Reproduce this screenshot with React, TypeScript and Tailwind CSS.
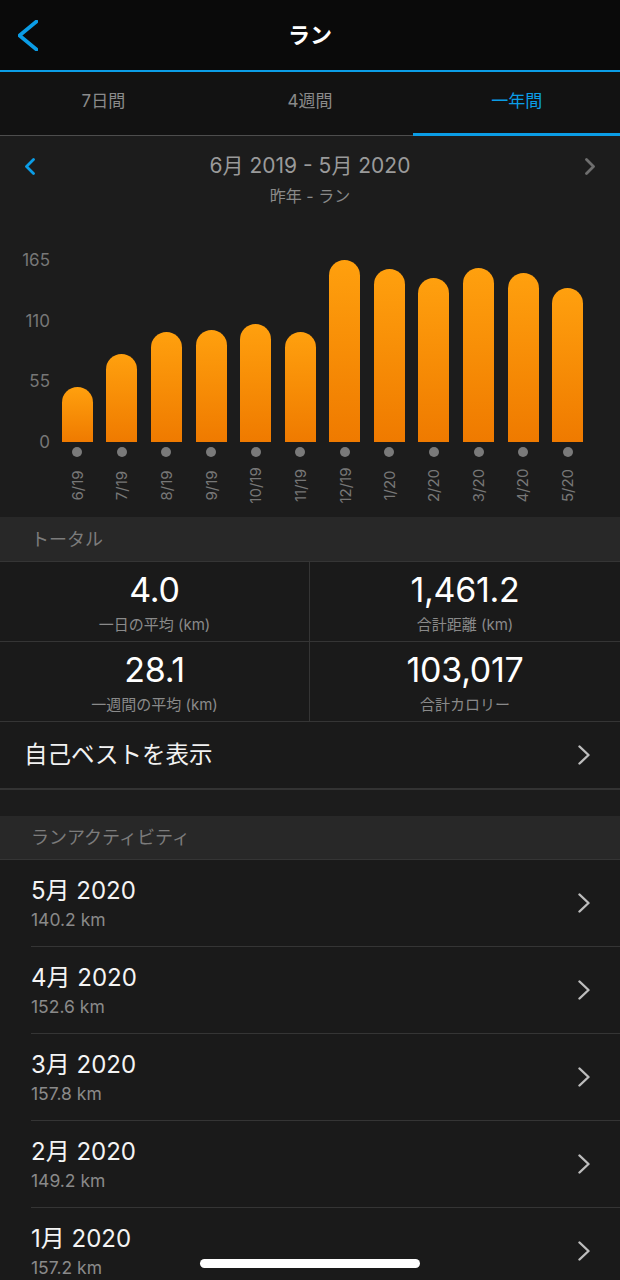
import React from "react";

const FONT = { fontFamily: '"Inter", "Noto Sans CJK JP", sans-serif' };

const bars = [
  { l: "6/19", h: 55 },
  { l: "7/19", h: 88 },
  { l: "8/19", h: 110 },
  { l: "9/19", h: 112 },
  { l: "10/19", h: 118 },
  { l: "11/19", h: 110 },
  { l: "12/19", h: 182 },
  { l: "1/20", h: 173 },
  { l: "2/20", h: 164 },
  { l: "3/20", h: 174 },
  { l: "4/20", h: 169 },
  { l: "5/20", h: 154 },
];

const months = [
  { t: "5月 2020", s: "140.2 km" },
  { t: "4月 2020", s: "152.6 km" },
  { t: "3月 2020", s: "157.8 km" },
  { t: "2月 2020", s: "149.2 km" },
  { t: "1月 2020", s: "157.2 km" },
];

function Chevron({ color = "#bdbdbd", left = false, w = 12, h = 20, sw = 2.4 }: { color?: string; left?: boolean; w?: number; h?: number; sw?: number }) {
  return (
    <svg width={w} height={h} viewBox={`0 0 ${w} ${h}`} fill="none">
      {left ? (
        <polyline points={`${w - 1.5},1.5 1.5,${h / 2} ${w - 1.5},${h - 1.5}`} stroke={color} strokeWidth={sw} strokeLinecap="round" strokeLinejoin="round" />
      ) : (
        <polyline points={`1.5,1.5 ${w - 1.5},${h / 2} 1.5,${h - 1.5}`} stroke={color} strokeWidth={sw} strokeLinecap="round" strokeLinejoin="round" />
      )}
    </svg>
  );
}

export default function App() {
  return (
    <div className="relative w-[620px] h-[1280px] overflow-hidden bg-[#1c1c1c]" style={FONT}>
      {/* Header */}
      <div className="h-[70px] bg-[#0a0a0a] grid grid-cols-[80px_1fr_80px] items-center">
        <div className="pl-[18px] flex items-center">
          <Chevron color="#0b9de6" left w={20} h={31} sw={3.6} />
        </div>
        <div className="text-center text-white text-[22px] font-bold leading-none">ラン</div>
        <div />
      </div>
      <div className="h-[2px] bg-[#0b9de6]" />

      {/* Tabs */}
      <div className="h-[64px] flex bg-[#121212]">
        <div className="flex-1 flex items-center justify-center border-b border-[#4d4d4d] text-[17px] text-[#8a8a8a] pb-[4px]">7日間</div>
        <div className="flex-1 flex items-center justify-center border-b border-[#4d4d4d] text-[17px] text-[#8a8a8a] pb-[4px]">4週間</div>
        <div className="flex-1 flex items-center justify-center border-b-[3px] border-[#0b9de6] text-[17px] text-[#0b9de6] pb-[2px]">一年間</div>
      </div>

      {/* Date nav */}
      <div className="bg-[#1c1c1c]">
        <div className="relative pt-[16px] flex flex-col items-center">
          <div className="text-[21px] leading-[28px] text-[#9a9a9a]">6月 2019 - 5月 2020</div>
          <div className="mt-[5px] text-[16px] leading-[22px] text-[#8a8a8a]">昨年 - ラン</div>
          <div className="absolute left-[25px] top-[22px]">
            <Chevron color="#0b9de6" left w={10} h={17} sw={2.8} />
          </div>
          <div className="absolute right-[25px] top-[22px]">
            <Chevron color="#6e6e6e" w={10} h={17} sw={2.8} />
          </div>
        </div>

        {/* Chart */}
        <div className="mt-[53px] flex">
          <div className="w-[55px] relative h-[182px] text-[17px] leading-[20px] text-[#777777]">
            <span className="absolute right-[5px] top-[-10px]">165</span>
            <span className="absolute right-[5px] top-[51px]">110</span>
            <span className="absolute right-[5px] top-[111px]">55</span>
            <span className="absolute right-[5px] top-[172px]">0</span>
          </div>
          <div className="w-[535px]">
            <div className="h-[182px] grid grid-cols-12 items-end">
              {bars.map((b) => (
                <div key={b.l} className="flex justify-center items-end h-full">
                  <div
                    className="w-[31px] rounded-t-full bg-linear-to-b from-[#ffa00e] to-[#ef7a00]"
                    style={{ height: b.h }}
                  />
                </div>
              ))}
            </div>
            <div className="mt-[5px] grid grid-cols-12">
              {bars.map((b) => (
                <div key={b.l} className="flex justify-center">
                  <div className="w-[10px] h-[10px] rounded-full bg-[#7a7a7a]" />
                </div>
              ))}
            </div>
            <div className="mt-[5px] h-[46px] grid grid-cols-12">
              {bars.map((b) => (
                <div key={b.l} className="flex justify-center items-center">
                  <span className="-rotate-90 whitespace-nowrap text-[15px] leading-none text-[#777777]">{b.l}</span>
                </div>
              ))}
            </div>
          </div>
        </div>
        <div className="h-[9px]" />
      </div>

      {/* Totals */}
      <div className="h-[45px] bg-[#282828] border-b border-[#353535] flex items-center px-[31px] text-[18px] text-[#7c7c7c]">トータル</div>
      <div className="grid grid-cols-2 bg-[#1a1a1a]">
        {[
          { v: "4.0", l: "一日の平均 (km)" },
          { v: "1,461.2", l: "合計距離 (km)" },
          { v: "28.1", l: "一週間の平均 (km)" },
          { v: "103,017", l: "合計カロリー" },
        ].map((c, i) => (
          <div
            key={c.v}
            className={`h-[80px] flex flex-col items-center pt-[8px] border-b border-[#353535] ${i % 2 === 0 ? "border-r" : ""}`}
          >
            <div className="text-[34px] leading-[40px] text-white tracking-[-0.3px]">{c.v}</div>
            <div className="mt-[5px] text-[15px] leading-[20px] text-[#8a8a8a]">{c.l}</div>
          </div>
        ))}
      </div>
      <div className="h-[68px] bg-[#1a1a1a] border-b-2 border-[#333333] flex items-center justify-between pl-[24px] pr-[30px]">
        <span className="text-[23.5px] text-[#f2f2f2]">自己ベストを表示</span>
        <Chevron />
      </div>
      <div className="h-[26px] bg-[#1c1c1c]" />

      {/* Activities */}
      <div className="h-[44px] bg-[#282828] border-b border-[#353535] flex items-center px-[31px] text-[18px] text-[#7c7c7c]">ランアクティビティ</div>
      <div className="bg-[#1a1a1a]">
        {months.map((m) => (
          <div key={m.t} className="pl-[31px]">
            <div className="h-[87px] border-b border-[#353535] flex items-center justify-between pr-[30px]">
              <div className="flex flex-col">
                <div className="text-[24px] leading-[30px] text-[#f4f4f4]">{m.t}</div>
                <div className="mt-[3px] text-[17.5px] leading-[22px] text-[#8a8a8a]">{m.s}</div>
              </div>
              <Chevron />
            </div>
          </div>
        ))}
      </div>

      {/* Home indicator */}
      <div className="absolute left-[200px] top-[1259px] w-[220px] h-[9px] rounded-full bg-white" />
    </div>
  );
}
